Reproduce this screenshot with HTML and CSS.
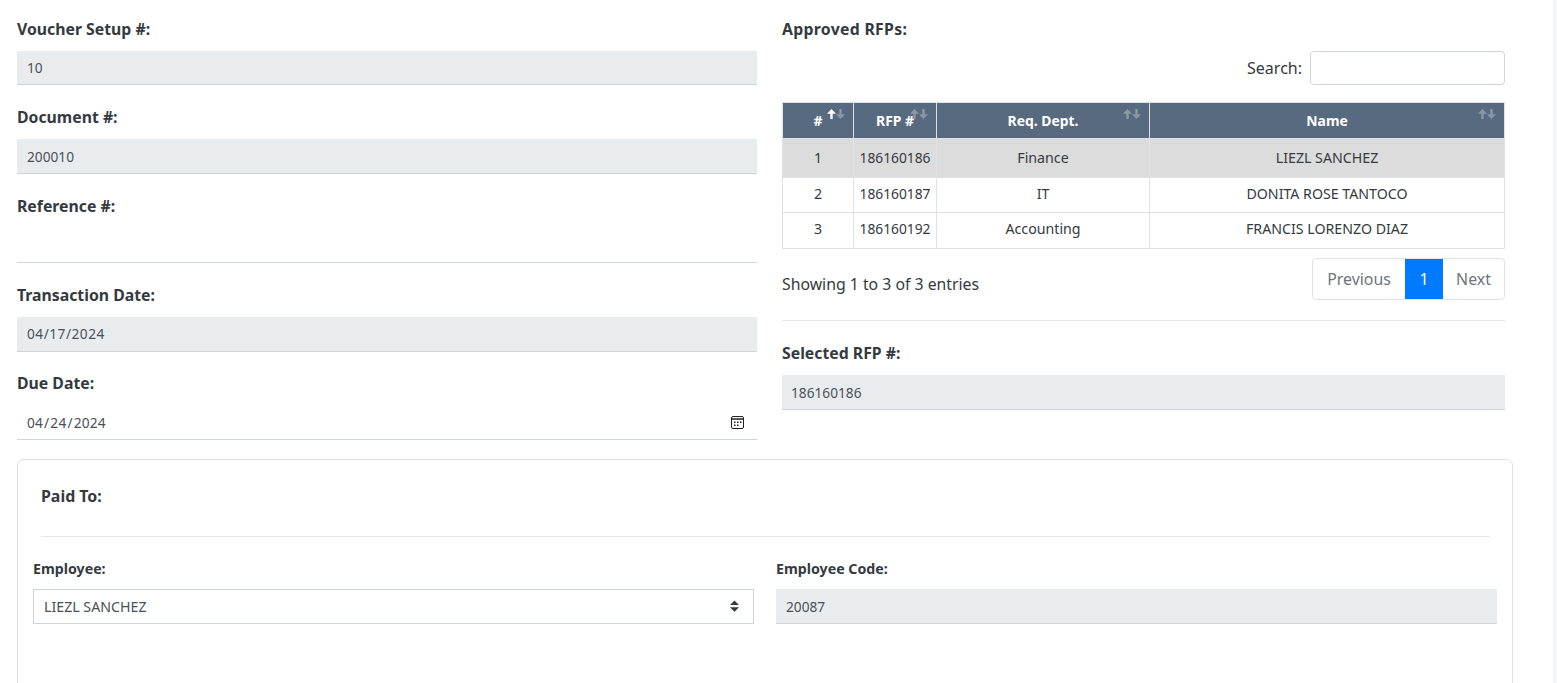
FILE: index.html
```html
<!DOCTYPE html>
<html lang="en">
<head>
  <meta charset="UTF-8">
  <meta name="viewport" content="width=device-width, initial-scale=1.0">
  <title>Voucher Setup</title>
  <link rel="stylesheet" href="styles.css">
</head>
<body>
  <div class="content">
    <div class="top-row">
      <div class="left-col">
        <div class="field">
          <label>Voucher Setup #:</label>
          <input type="text" class="input readonly" value="10" readonly>
        </div>
        <div class="field">
          <label>Document #:</label>
          <input type="text" class="input readonly" value="200010" readonly>
        </div>
        <div class="field">
          <label>Reference #:</label>
          <input type="text" class="input" value="">
        </div>
        <div class="field">
          <label>Transaction Date:</label>
          <input type="text" class="input readonly date-text" value="04/17/2024" readonly>
        </div>
        <div class="field">
          <label>Due Date:</label>
          <input type="date" class="input date-input" value="2024-04-24">
        </div>
      </div>

      <div class="right-col">
        <label class="rfp-heading">Approved RFPs:</label>
        <div class="search-row">
          <span>Search:</span>
          <input type="search" class="search-input">
        </div>
        <table class="rfp-table">
          <thead>
            <tr>
              <th class="col-no sorted">#</th>
              <th class="col-rfp">RFP #</th>
              <th class="col-dept">Req. Dept.</th>
              <th>Name</th>
            </tr>
          </thead>
          <tbody>
            <tr class="selected">
              <td>1</td>
              <td class="rfp-no">186160186</td>
              <td>Finance</td>
              <td>LIEZL SANCHEZ</td>
            </tr>
            <tr>
              <td>2</td>
              <td class="rfp-no">186160187</td>
              <td>IT</td>
              <td>DONITA ROSE TANTOCO</td>
            </tr>
            <tr class="last">
              <td>3</td>
              <td class="rfp-no">186160192</td>
              <td>Accounting</td>
              <td>FRANCIS LORENZO DIAZ</td>
            </tr>
          </tbody>
        </table>
        <div class="table-footer">
          <span class="table-info">Showing 1 to 3 of 3 entries</span>
          <div class="pagination">
            <a class="page-link page-prev">Previous</a>
            <a class="page-link page-num active">1</a>
            <a class="page-link page-next">Next</a>
          </div>
        </div>
        <hr class="divider">
        <div class="field selected-rfp">
          <label>Selected RFP #:</label>
          <input type="text" class="input readonly" value="186160186" readonly>
        </div>
      </div>
    </div>

    <div class="card">
      <h4 class="card-title">Paid To:</h4>
      <hr class="divider card-divider">
      <div class="card-row">
        <div class="card-field">
          <label>Employee:</label>
          <select class="select">
            <option>LIEZL SANCHEZ</option>
          </select>
        </div>
        <div class="card-field">
          <label>Employee Code:</label>
          <input type="text" class="input readonly" value="20087" readonly>
        </div>
      </div>
    </div>
  </div>
</body>
</html>
```

FILE: styles.css
```css
html, body {
  height: 100%;
  overflow: hidden;
}
body {
  margin: 0;
  background-color: #f4f6f9;
  font-family: "Noto Sans", sans-serif;
  color: #343a40;
}
* {
  box-sizing: border-box;
}
.content {
  width: 1553px;
  height: 683px;
  overflow: hidden;
  padding: 16.7px 40px 0 17px;
  background-color: #fff;
}
.top-row {
  display: grid;
  grid-template-columns: 740px 723px;
  column-gap: 25px;
  height: 442px;
}
label {
  display: block;
  font-size: 15.8px;
  font-weight: 700;
  line-height: 24px;
  margin-bottom: 10px;
}
.rfp-heading {
  letter-spacing: 0.3px;
}
.field {
  height: 88.7px;
}
.input {
  display: block;
  width: 100%;
  height: 34.5px;
  padding: 0 10px;
  border: 0;
  border-bottom: 1px solid #ced4da;
  background-color: #fff;
  font-family: inherit;
  font-size: 13.7px;
  color: #495057;
  outline: none;
}
.readonly {
  background-color: #e9ecef;
}
.date-text {
  height: 35px;
  letter-spacing: 0.5px;
}
.date-input {
  height: 35px;
  padding-left: 9px;
  letter-spacing: 0.2px;
  background: #fff url("data:image/svg+xml,%3csvg xmlns='http://www.w3.org/2000/svg' width='13' height='13' viewBox='0 0 13 13'%3e%3crect x='.5' y='.5' width='12' height='12' rx='1.5' fill='none' stroke='%23222'/%3e%3cpath d='M1 3h11' stroke='%23222' stroke-width='1.5'/%3e%3cpath d='M3 5.500h1.500v1.500H3zM6 5.500h1.500v1.500H6zM9 5.500h1.500v1.500H9zM3 8.500h1.500v1.500H3zM6 8.500h1.500v1.500H6z' fill='%23222'/%3e%3c/svg%3e") no-repeat right 13px center;
}
.date-input::-webkit-calendar-picker-indicator {
  opacity: 0;
}

/* search box */
.search-row {
  display: flex;
  justify-content: flex-end;
  align-items: center;
  gap: 8px;
  height: 34px;
  font-size: 16px;
}
.search-input {
  width: 195px;
  height: 34px;
  border: 1px solid #ced4da;
  border-radius: 4px;
  background: #fff;
}

/* table */
.rfp-table {
  width: 723px;
  margin-top: 17px;
  border-collapse: collapse;
  table-layout: fixed;
  font-size: 14.2px;
  text-align: center;
}
.rfp-table th, .rfp-table td {
  border: 1px solid #dee2e6;
  padding: 0;
}
.rfp-table th {
  position: relative;
  height: 36px;
  background-color: #586a80;
  color: #fff;
  font-size: 13.9px;
  font-weight: 700;
}
.rfp-table th::before, .rfp-table th::after {
  content: "";
  position: absolute;
  top: 6px;
  width: 9px;
  height: 10px;
  opacity: 0.3;
}
.rfp-table th::before {
  right: 17px;
  background: url("data:image/svg+xml,%3csvg xmlns='http://www.w3.org/2000/svg' width='9' height='10' viewBox='0 0 9 10'%3e%3cpath fill='%23fff' d='M4.500 0L9 4.800H5.700V10H3.300V4.800H0z'/%3e%3c/svg%3e") no-repeat;
}
.rfp-table th::after {
  right: 8px;
  background: url("data:image/svg+xml,%3csvg xmlns='http://www.w3.org/2000/svg' width='9' height='10' viewBox='0 0 9 10'%3e%3cpath fill='%23fff' d='M4.500 10L0 5.200H3.300V0H5.700V5.200H9z'/%3e%3c/svg%3e") no-repeat;
}
.rfp-table th.sorted::before {
  opacity: 1;
}
.col-no { width: 71px; }
.col-rfp { width: 83px; }
.col-dept { width: 213px; }
.rfp-table td {
  height: 35px;
  padding-bottom: 2px;
}
.rfp-table .selected td {
  height: 39px;
  padding-bottom: 0;
  background-color: #dcdcdc;
}
.rfp-table .last td {
  height: 36px;
  padding-bottom: 3px;
}
.rfp-table .rfp-no {
  font-size: 13.8px;
}

/* pagination */
.table-footer {
  display: flex;
  justify-content: space-between;
  align-items: flex-start;
  margin-top: 9px;
  font-size: 15.8px;
}
.table-info {
  margin-top: 15px;
}
.pagination {
  display: flex;
  height: 42px;
  border: 1px solid #dee2e6;
  border-radius: 4px;
}
.page-link {
  display: flex;
  align-items: center;
  justify-content: center;
  color: #6c757d;
  font-size: 15.9px;
}
.page-prev { width: 92px; }
.page-num { width: 38px; }
.page-next { width: 61px; }
.page-link.active {
  background-color: #007bff;
  color: #fff;
}
.divider {
  height: 1px;
  margin: 20px 0 0;
  border: 0;
  background-color: #e2e4e8;
}
.selected-rfp {
  margin-top: 20px;
}
.selected-rfp .input {
  height: 35px;
  padding-left: 9px;
  padding-top: 1px;
}

/* paid to card */
.card {
  width: 1496px;
  height: 260px;
  padding: 24px 15px 0;
  border: 1px solid #dfe1e5;
  border-radius: 6px;
}
.card-title {
  margin: 0 8px;
  font-size: 15.9px;
  font-weight: 700;
  line-height: 24px;
}
.card-divider {
  margin: 28px 7px 0 8px;
}
.card-row {
  display: grid;
  grid-template-columns: 721px 721px;
  column-gap: 22px;
  margin-top: 20px;
}
.card-field label {
  font-size: 14.2px;
  margin-bottom: 8px;
}
.card-field .input {
  height: 35px;
  padding-top: 1px;
}
.select {
  display: block;
  width: 100%;
  height: 35px;
  padding: 0 10px;
  border: 1px solid #ced4da;
  border-radius: 0;
  font-family: inherit;
  font-size: 14.2px;
  color: #495057;
  appearance: none;
  background: #fff url("data:image/svg+xml,%3csvg xmlns='http://www.w3.org/2000/svg' width='4' height='5' viewBox='0 0 4 5'%3e%3cpath fill='%23343a40' d='M2 0L0 2h4zm0 5L0 3h4z'/%3e%3c/svg%3e") no-repeat right 14px center / 9px 12px;
}
```
